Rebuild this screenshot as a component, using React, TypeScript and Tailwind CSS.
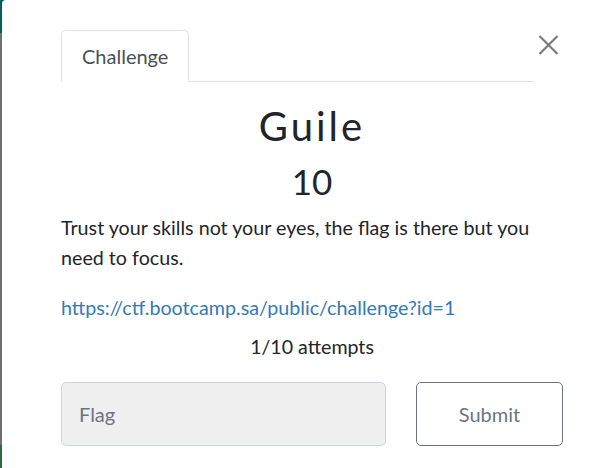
import React from "react";

export default function App() {
  return (
    <div
      className="flex w-[616px] h-[468px] overflow-hidden bg-[#0b5a5e]"
      style={{ fontFamily: "Lato, 'Open Sans', sans-serif" }}
    >
      <div className="flex w-[2px] flex-col shrink-0">
        <div className="h-[33px] bg-[#0b5a5e]" />
        <div className="flex-1 bg-[#6f6f6f]" />
        <div className="h-[23px] bg-[#2f6a3c]" />
      </div>
      <div className="flex-1 bg-white rounded-tl-[4px] pt-[30px] pl-[59px]">
        <div className="w-[502px]">
          <div className="flex">
            <div className="flex flex-1 border-b border-[#dee2e6]">
              <div className="-mb-px border border-[#dee2e6] border-b-white rounded-t-[5px] bg-white px-[20px] py-[10px] text-[20px] leading-[30px] text-[#495057]">
                Challenge
              </div>
            </div>
            <div className="flex w-[29px] justify-center pt-[5px]">
              <svg width="21" height="20" viewBox="0 0 21 20">
                <path
                  d="M1.5 1 L19.5 19 M19.5 1 L1.5 19"
                  stroke="#7b7b7b"
                  strokeWidth="2.2"
                  fill="none"
                />
              </svg>
            </div>
          </div>

          <h2 className="pt-[20px] text-center text-[40px] leading-[48px] tracking-[3px] text-[#212529] mb-[10px]">
            Guile
          </h2>
          <h3 className="text-center text-[35px] leading-[42px] text-[#212529] mb-[11px]">
            10
          </h3>
          <p className="text-[19.7px] leading-[30px] text-[#212529] mb-[20px]">
            Trust your skills not your eyes, the flag is there but you need to
            focus.
          </p>
          <p className="text-[19.7px] leading-[30px]">
            <a className="text-[#337ab7]" href="#">
              https://ctf.bootcamp.sa/public/challenge?id=1
            </a>
          </p>
          <p className="mt-[9px] text-center text-[19.6px] leading-[30px] text-[#212529]">
            1/10 attempts
          </p>
          <div className="mt-[20px] flex justify-between">
            <input
              className="h-[64px] w-[325px] rounded-[5px] border border-[#ced4da] bg-[#efefef] px-[17px] text-[20px] text-[#495057] placeholder:text-[#6c757d] outline-none"
              placeholder="Flag"
              readOnly
            />
            <button className="h-[64px] w-[147px] rounded-[5px] border border-[#6c757d] bg-white text-[20px] text-[#6c757d]">
              Submit
            </button>
          </div>
        </div>
      </div>
    </div>
  );
}
